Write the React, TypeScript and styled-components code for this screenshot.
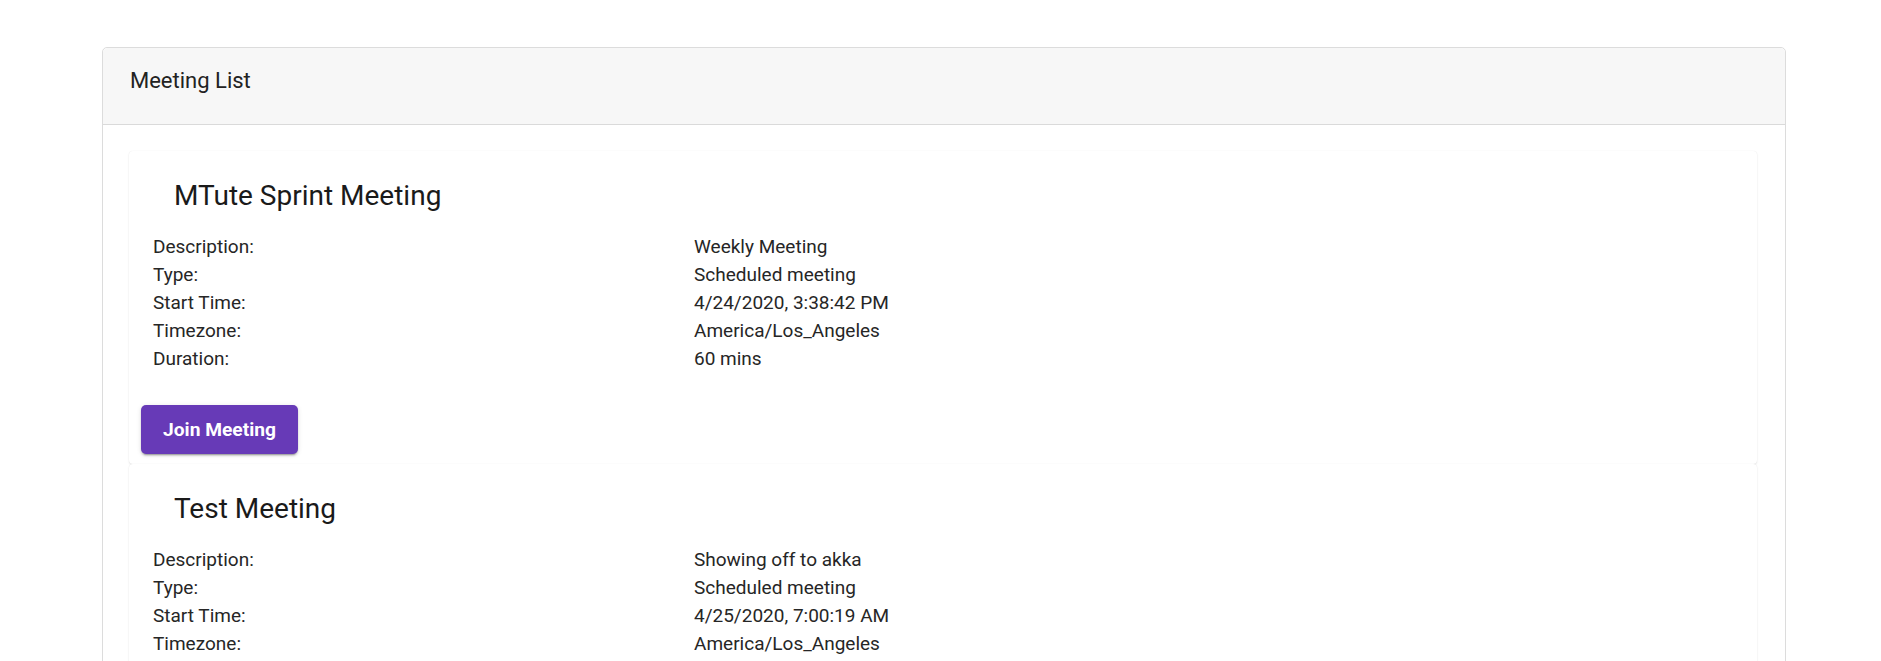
import React from "react";
import styled, { createGlobalStyle } from "styled-components";

const GlobalStyle = createGlobalStyle`
  html, body {
    margin: 0;
    padding: 0;
    background: #ffffff;
    font-family: Roboto, "Liberation Sans", Arial, sans-serif;
    color: #212121;
  }
`;

const Page = styled.div`
  padding: 47px 95px 0 102px;
`;

const Panel = styled.section`
  border: 1px solid #dcdcdc;
  border-radius: 5px;
  background: #ffffff;
`;

const PanelHeader = styled.header`
  height: 77px;
  box-sizing: border-box;
  padding: 19px 0 0 27px;
  background: #f7f7f7;
  border-bottom: 1px solid #dadada;
  border-radius: 5px 5px 0 0;
  font-size: 22px;
  line-height: 28px;
  color: #222222;
`;

const PanelBody = styled.div`
  padding: 26px 28px 0 26px;
`;

const Card = styled.article`
  height: 313px;
  box-sizing: border-box;
  background: #ffffff;
  border-radius: 4px;
  box-shadow: 0 1px 2px rgba(0, 0, 0, 0.1), 0 0 1px rgba(0, 0, 0, 0.08);
  padding: 28px 0 0 0;
  display: flex;
  flex-direction: column;
`;

const Title = styled.h2`
  margin: 0;
  padding-left: 45px;
  font-size: 28px;
  font-weight: 400;
  line-height: 34px;
  color: #1a1a1a;
`;

const Details = styled.dl`
  margin: 20px 0 0 0;
  padding-left: 24px;
  display: grid;
  grid-template-columns: 541px 1fr;
  font-size: 19px;
  line-height: 28px;
`;

const Label = styled.dt`
  margin: 0;
  color: #262626;
`;

const Value = styled.dd`
  margin: 0;
  color: #262626;
`;

const Actions = styled.div`
  margin-top: 32px;
  padding-left: 12px;
  display: flex;
`;

const JoinButton = styled.button`
  height: 49px;
  padding: 0 22px;
  border: none;
  border-radius: 5px;
  background: #673ab7;
  color: #ffffff;
  font-family: Roboto, "Liberation Sans", Arial, sans-serif;
  font-size: 19.2px;
  font-weight: 700;
  box-shadow: 0 3px 1px -2px rgba(0, 0, 0, 0.2), 0 2px 2px 0 rgba(0, 0, 0, 0.14),
    0 1px 5px 0 rgba(0, 0, 0, 0.12);
  cursor: pointer;
`;

type Meeting = {
  title: string;
  description: string;
  type: string;
  start: string;
  timezone: string;
  duration: string;
};

const meetings: Meeting[] = [
  {
    title: "MTute Sprint Meeting",
    description: "Weekly Meeting",
    type: "Scheduled meeting",
    start: "4/24/2020, 3:38:42 PM",
    timezone: "America/Los_Angeles",
    duration: "60 mins",
  },
  {
    title: "Test Meeting",
    description: "Showing off to akka",
    type: "Scheduled meeting",
    start: "4/25/2020, 7:00:19 AM",
    timezone: "America/Los_Angeles",
    duration: "30 mins",
  },
];

function MeetingCard({ m }: { m: Meeting }) {
  const rows: [string, string][] = [
    ["Description:", m.description],
    ["Type:", m.type],
    ["Start Time:", m.start],
    ["Timezone:", m.timezone],
    ["Duration:", m.duration],
  ];
  return (
    <Card>
      <Title>{m.title}</Title>
      <Details>
        {rows.map(([l, v]) => (
          <React.Fragment key={l}>
            <Label>{l}</Label>
            <Value>{v}</Value>
          </React.Fragment>
        ))}
      </Details>
      <Actions>
        <JoinButton>Join Meeting</JoinButton>
      </Actions>
    </Card>
  );
}

export default function App() {
  return (
    <>
      <GlobalStyle />
      <Page>
        <Panel>
          <PanelHeader>Meeting List</PanelHeader>
          <PanelBody>
            {meetings.map((m) => (
              <MeetingCard key={m.title} m={m} />
            ))}
          </PanelBody>
        </Panel>
      </Page>
    </>
  );
}
